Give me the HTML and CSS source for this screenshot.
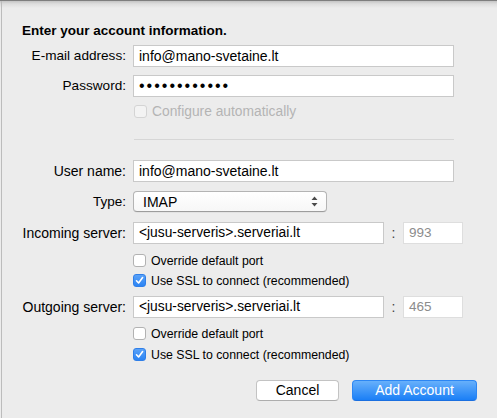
FILE: index.html
```html
<!DOCTYPE html>
<html>
<head>
<meta charset="utf-8">
<link rel="stylesheet" href="styles.css">
</head>
<body>
<div class="window">
  <div class="content">
    <h1 class="heading">Enter your account information.</h1>

    <div class="row row-email">
      <label class="label">E-mail address:</label>
      <div class="field field-wide">info@mano-svetaine.lt</div>
    </div>
    <div class="row row-pass">
      <label class="label">Password:</label>
      <div class="field field-wide dots">••••••••••••</div>
    </div>
    <div class="check-row row-auto disabled">
      <span class="box"></span><span class="check-text">Configure automatically</span>
    </div>

    <div class="separator"></div>

    <div class="row row-user">
      <label class="label">User name:</label>
      <div class="field field-wide">info@mano-svetaine.lt</div>
    </div>
    <div class="row row-type">
      <label class="label">Type:</label>
      <div class="select">
        <span>IMAP</span>
        <svg class="arrows" width="7" height="11" viewBox="0 0 7 11"><path d="M3.5 0.5 L6.5 4 L0.5 4 Z M3.5 10.5 L6.5 7 L0.5 7 Z" fill="#4a4a4a"/></svg>
      </div>
    </div>
    <div class="row row-in">
      <label class="label">Incoming server:</label>
      <div class="field field-server">&lt;jusu-serveris&gt;.serveriai.lt</div>
      <span class="colon">:</span>
      <div class="field field-port">993</div>
    </div>
    <div class="check-row row-ov1 small">
      <span class="box"></span><span class="check-text">Override default port</span>
    </div>
    <div class="check-row row-ssl1 small">
      <span class="box checked"><svg width="9" height="9" viewBox="0 0 9 9"><path d="M1.5 4.8 L3.6 7 L7.6 1.6" fill="none" stroke="#fff" stroke-width="1.6" stroke-linecap="round" stroke-linejoin="round"/></svg></span><span class="check-text">Use SSL to connect (recommended)</span>
    </div>

    <div class="row row-out">
      <label class="label">Outgoing server:</label>
      <div class="field field-server">&lt;jusu-serveris&gt;.serveriai.lt</div>
      <span class="colon">:</span>
      <div class="field field-port">465</div>
    </div>
    <div class="check-row row-ov2 small">
      <span class="box"></span><span class="check-text">Override default port</span>
    </div>
    <div class="check-row row-ssl2 small">
      <span class="box checked"><svg width="9" height="9" viewBox="0 0 9 9"><path d="M1.5 4.8 L3.6 7 L7.6 1.6" fill="none" stroke="#fff" stroke-width="1.6" stroke-linecap="round" stroke-linejoin="round"/></svg></span><span class="check-text">Use SSL to connect (recommended)</span>
    </div>

    <div class="buttons">
      <button class="btn btn-cancel">Cancel</button>
      <button class="btn btn-primary">Add Account</button>
    </div>
  </div>
</div>
</body>
</html>
```

FILE: styles.css
```css
* { box-sizing: border-box; }
html, body {
  margin: 0;
  padding: 0;
  background: #ececec;
}
body {
  font-family: "Liberation Sans", Arial, sans-serif;
  font-size: 14px;
  color: #000;
  width: 497px;
  height: 418px;
  overflow: hidden;
}
.window {
  height: 418px;
  border-top: 1px solid #7e7e7e;
  background: linear-gradient(#c4c4c4 0px, #dedede 3px, #ececec 7px);
}
.content {
  margin-left: 1px;
  height: 100%;
  border-left: 1px solid #bcbcbc;
  padding-top: 22px;
}
.heading {
  margin: 0;
  padding-left: 20px;
  font-size: 13.5px;
  line-height: 16px;
  font-weight: bold;
}
.row {
  display: flex;
  align-items: center;
  height: 22px;
}
.label {
  width: 124px;
  text-align: right;
  flex-shrink: 0;
  margin-right: 7px;
  line-height: 16px;
  font-size: 14px;
  white-space: nowrap;
}
.row-email .label, .row-pass .label { font-size: 13.6px; }
.row-type .label { font-size: 13.5px; }
.field {
  height: 22px;
  background: #fff;
  border: 1px solid #c9c9c9;
  padding: 0 5px;
  line-height: 20px;
  white-space: nowrap;
  overflow: hidden;
}
.field-wide { width: 321px; }
.dots { font-size: 16px; letter-spacing: 2px; padding-left: 5px; }
.field-server { width: 251px; font-size: 13.8px; }
.colon {
  width: 19px;
  text-align: center;
  color: #444;
}
.field-port {
  width: 60px;
  color: #8c8c8c;
  border-color: #dedede;
  font-size: 13.5px;
}
.row-email { margin-top: 6px; }
.row-pass { margin-top: 8px; }

.check-row {
  display: flex;
  align-items: center;
  height: 13px;
  padding-left: 131px;
}
.box {
  width: 13px;
  height: 13px;
  border: 1px solid #b2b2b2;
  border-radius: 3px;
  background: #fff;
  flex-shrink: 0;
  display: flex;
  align-items: center;
  justify-content: center;
}
.box.checked {
  border-color: #2f7fe8;
  background: linear-gradient(#5aa2f8, #2b84f4);
}
.check-text {
  margin-left: 5px;
  line-height: 16px;
  white-space: nowrap;
  font-size: 13.8px;
}
.small .check-text { font-size: 12.3px; margin-left: 5px; }
.disabled .box { border-color: #d4d4d4; background: #f3f3f3; }
.disabled .check-text { color: #b4b4b4; }
.row-auto { margin-top: 8px; padding-left: 132px; }

.separator {
  margin-top: 21px;
  margin-left: 132px;
  width: 320px;
  height: 1px;
  background: #d6d6d6;
}
.row-user { margin-top: 20px; }
.row-type { margin-top: 9px; height: 21px; }
.select {
  width: 194px;
  height: 21px;
  background: linear-gradient(#ffffff, #f7f7f7);
  border: 1px solid #b4b4b4;
  border-bottom-color: #9c9c9c;
  border-radius: 4px;
  display: flex;
  align-items: center;
  justify-content: space-between;
  padding: 0 8px 0 9px;
  box-shadow: 0 0.5px 0.5px rgba(0,0,0,0.08);
}
.arrows { display: block; }
.row-in { margin-top: 10px; }
.row-ov1 { margin-top: 10px; }
.row-ssl1 { margin-top: 7px; }
.row-out { margin-top: 9px; }
.row-ov2 { margin-top: 9px; }
.row-ssl2 { margin-top: 8px; }

.buttons {
  display: flex;
  justify-content: flex-end;
  gap: 13px;
  margin-top: 19px;
  padding-right: 20px;
}
.btn {
  height: 21px;
  font-family: "Liberation Sans", Arial, sans-serif;
  font-size: 14px;
  border-radius: 4px;
  padding: 0;
  line-height: 19px;
}
.btn-cancel {
  width: 83px;
  background: #fff;
  color: #000;
  border: 1px solid #c3c3c3;
  border-bottom-color: #adadad;
}
.btn-primary {
  width: 125px;
  color: #fff;
  border: 1px solid #2c86f3;
  border-bottom-color: #1a6fe0;
  background: linear-gradient(#67b0fb, #1b7ff6);
}
```
